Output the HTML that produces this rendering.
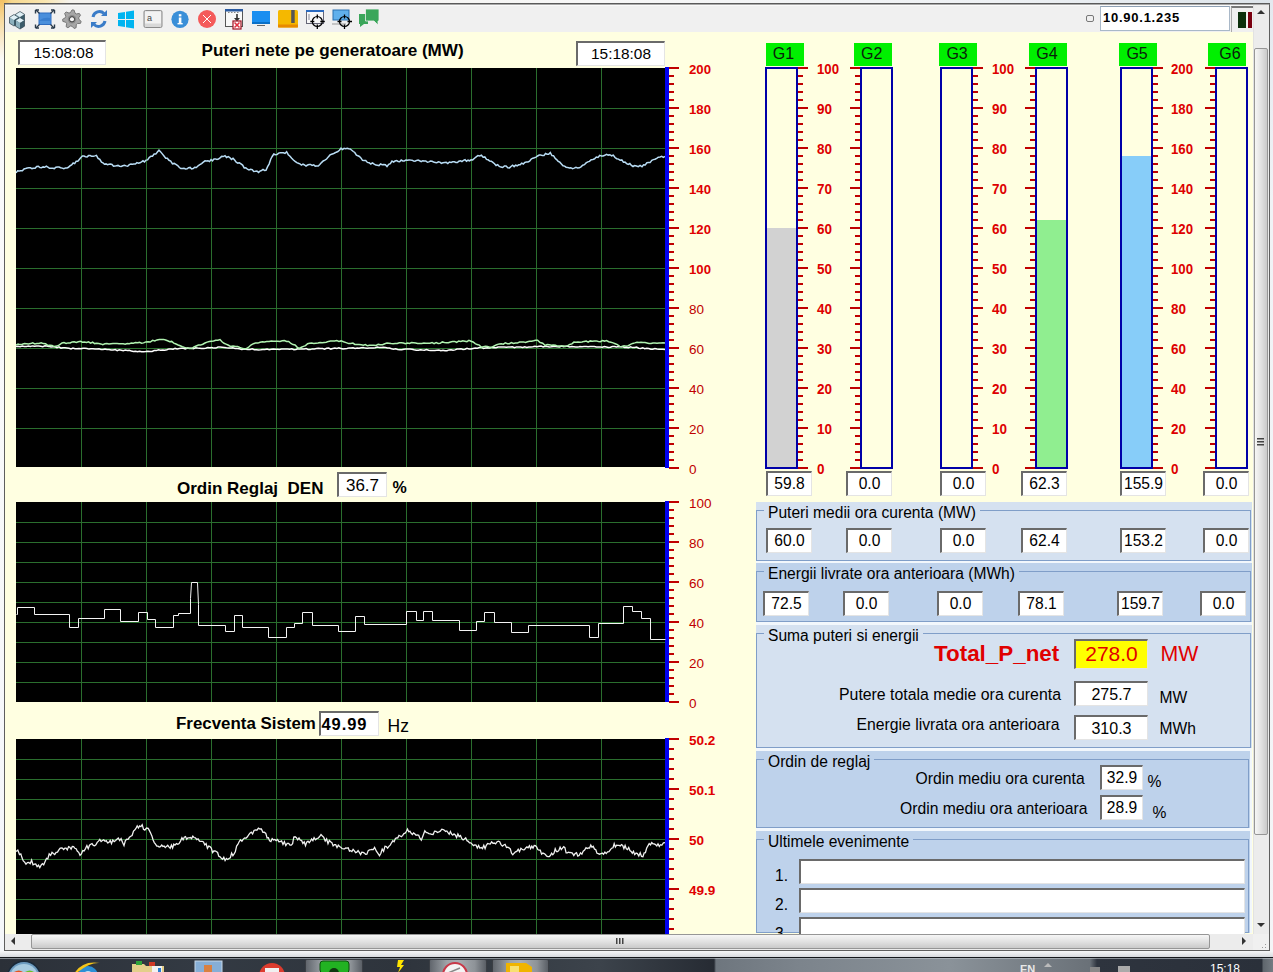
<!DOCTYPE html><html><head><meta charset="utf-8"><style>
*{margin:0;padding:0;box-sizing:border-box}
html,body{width:1273px;height:972px;overflow:hidden;background:#e8ecf0;font-family:"Liberation Sans",sans-serif}
.a{position:absolute}
.t{position:absolute;white-space:nowrap;line-height:1}
.bx{position:absolute;border-top:2px solid #6a6a6a;border-left:2px solid #6a6a6a;border-right:1px solid #e4e4e4;border-bottom:1px solid #e4e4e4;display:flex;align-items:center;justify-content:center;white-space:nowrap;line-height:1}
.gl{position:absolute;top:43px;width:38px;height:23px;background:#00f000}
.frame{position:absolute;border:1px solid #809ec8}
</style></head><body>

<div class="a" style="left:0;top:0;width:1273px;height:4px;background:linear-gradient(90deg,#f0b850 0,#f6d890 12px,#fae6b0 45px,#f5f3ee 70px,#f7f7f7 600px,#eef1f4 1000px,#dde4ea 1273px)"></div>
<div class="a" style="left:0;top:0;width:4px;height:972px;background:linear-gradient(180deg,#f3c163 0,#f8dba0 20px,#fbfbfb 60px,#f5f7fa 900px)"></div>
<div class="a" style="left:1270px;top:0;width:3px;height:972px;background:linear-gradient(180deg,#e4e9ef,#f0f3f6 200px,#f4f5f7)"></div>
<div class="a" style="left:4px;top:3px;width:1266px;height:948px;border:1px solid #5e5e5e;border-top:2px solid #a8a8a8;background:#fff"></div>
<div class="a" style="left:4px;top:3px;width:1266px;height:1px;background:#5a5a5a"></div>
<div class="a" style="left:5px;top:5px;width:1248px;height:27px;background:#f0f0f0;border-top:1px solid #fafafa"></div>
<div class="a" style="left:5px;top:32px;width:1248px;height:902px;background:#ffffe1"></div>
<div class="bx" style="left:18px;top:40px;width:88px;height:25px;background:#fff"><span style="font-size:15.4px;color:#000;font-weight:normal;position:relative;left:1px">15:08:08</span></div>
<div class="bx" style="left:576px;top:41px;width:89px;height:25px;background:#fff"><span style="font-size:15.4px;color:#000;font-weight:normal;">15:18:08</span></div>
<div class="t" style="left:201.5px;top:41.5px;font-size:17.1px;font-weight:bold;color:#000;">Puteri nete pe generatoare (MW)</div>
<div class="t" style="left:177.0px;top:479.6px;font-size:17px;font-weight:bold;color:#000;">Ordin Reglaj&nbsp; DEN</div>
<div class="bx" style="left:337px;top:472px;width:50px;height:25px;background:#fff"><span style="font-size:17px;color:#000;font-weight:normal;position:relative;top:0.5px">36.7</span></div>
<div class="t" style="left:392.5px;top:479.9px;font-size:16px;font-weight:bold;color:#000;">%</div>
<div class="t" style="left:176.0px;top:715.8px;font-size:16.9px;font-weight:bold;color:#000;">Frecventa Sistem</div>
<div class="bx" style="left:319px;top:711px;width:60px;height:25px;background:#fff;justify-content:flex-start"></div>
<div class="t" style="left:321.5px;top:716.2px;font-size:16.5px;font-weight:bold;color:#000;letter-spacing:0.9px">49.99</div>
<div class="t" style="left:387.5px;top:717.9px;font-size:17.5px;font-weight:normal;color:#000;">Hz</div>
<svg class="a" style="left:0;top:0" width="1273" height="972" font-family="Liberation Sans, sans-serif"><defs><clipPath id="c1"><rect x="16" y="68" width="649" height="400"/></clipPath><clipPath id="c3"><rect x="16" y="739" width="649" height="194"/></clipPath></defs><rect x="16" y="68" width="649" height="399" fill="#000"/><path d="M16 108.5H665M16 148.5H665M16 188.5H665M16 228.5H665M16 268.5H665M16 308.5H665M16 348.5H665M16 388.5H665M16 428.5H665M81.5 68V467M146.5 68V467M211.5 68V467M276.5 68V467M341.5 68V467M406.5 68V467M471.5 68V467M536.5 68V467M601.5 68V467" stroke="#2a6e2e" stroke-width="1" fill="none"/><rect x="665" y="67" width="4" height="401" fill="#0000f0"/><path d="M669 68h10M669 76h5M669 84h5M669 92h5M669 100h5M669 108h10M669 116h5M669 124h5M669 132h5M669 140h5M669 148h10M669 156h5M669 164h5M669 172h5M669 180h5M669 188h10M669 196h5M669 204h5M669 212h5M669 220h5M669 228h10M669 236h5M669 244h5M669 252h5M669 260h5M669 268h10M669 276h5M669 284h5M669 292h5M669 300h5M669 308h10M669 316h5M669 324h5M669 332h5M669 340h5M669 348h10M669 356h5M669 364h5M669 372h5M669 380h5M669 388h10M669 396h5M669 404h5M669 412h5M669 420h5M669 428h10M669 436h5M669 444h5M669 452h5M669 460h5M669 468h10" stroke="#c00000" stroke-width="2" fill="none"/><text x="689.0" y="69.0" font-size="13.5" font-weight="bold" fill="#e00000" dominant-baseline="central" textLength="22" lengthAdjust="spacingAndGlyphs">200</text><text x="689.0" y="109.0" font-size="13.5" font-weight="bold" fill="#e00000" dominant-baseline="central" textLength="22" lengthAdjust="spacingAndGlyphs">180</text><text x="689.0" y="149.0" font-size="13.5" font-weight="bold" fill="#e00000" dominant-baseline="central" textLength="22" lengthAdjust="spacingAndGlyphs">160</text><text x="689.0" y="189.0" font-size="13.5" font-weight="bold" fill="#e00000" dominant-baseline="central" textLength="22" lengthAdjust="spacingAndGlyphs">140</text><text x="689.0" y="229.0" font-size="13.5" font-weight="bold" fill="#e00000" dominant-baseline="central" textLength="22" lengthAdjust="spacingAndGlyphs">120</text><text x="689.0" y="269.0" font-size="13.5" font-weight="bold" fill="#e00000" dominant-baseline="central" textLength="22" lengthAdjust="spacingAndGlyphs">100</text><text x="689.0" y="309.0" font-size="13.5" font-weight="normal" fill="#c00000" dominant-baseline="central" >80</text><text x="689.0" y="349.0" font-size="13.5" font-weight="normal" fill="#c00000" dominant-baseline="central" >60</text><text x="689.0" y="389.0" font-size="13.5" font-weight="normal" fill="#c00000" dominant-baseline="central" >40</text><text x="689.0" y="429.0" font-size="13.5" font-weight="normal" fill="#c00000" dominant-baseline="central" >20</text><text x="689.0" y="469.0" font-size="13.5" font-weight="normal" fill="#c00000" dominant-baseline="central" >0</text><g clip-path="url(#c1)"><polyline points="16.0,346.5 18.1,346.2 20.1,346.8 22.2,346.1 24.2,346.6 26.3,346.4 28.4,346.0 30.4,346.5 32.5,345.9 34.6,346.3 36.6,345.9 38.7,345.9 40.8,346.2 42.8,346.7 44.9,345.8 46.9,345.9 49.0,346.4 51.0,347.0 53.0,346.8 55.0,346.8 57.0,347.7 59.0,346.9 61.0,348.1 63.0,347.7 65.0,347.7 67.0,347.9 69.0,348.2 71.0,348.9 73.0,348.1 75.0,348.7 77.0,348.8 79.0,348.5 81.0,348.8 83.0,348.2 85.0,348.3 87.0,348.5 89.0,349.1 91.0,348.8 93.0,348.7 95.0,349.1 97.0,349.0 99.0,348.8 101.0,349.5 103.0,349.4 105.0,348.9 107.0,349.4 109.1,349.5 111.1,350.0 113.1,350.0 115.2,349.6 117.2,350.6 119.2,349.7 121.3,350.2 123.3,350.7 125.3,350.1 127.3,350.6 129.4,350.2 131.4,351.1 133.4,351.4 135.5,351.3 137.5,351.8 139.5,351.2 141.6,351.8 143.6,351.8 145.7,351.6 147.8,351.2 149.9,351.5 152.1,351.4 154.2,350.6 156.3,350.6 158.4,349.7 160.5,350.3 162.7,350.0 164.8,350.2 166.9,349.8 169.0,348.9 171.0,349.0 173.1,349.3 175.1,348.4 177.2,348.9 179.2,348.4 181.2,348.3 183.3,348.2 185.3,348.9 187.4,348.1 189.4,348.2 191.4,348.3 193.5,348.8 195.5,347.8 197.6,348.1 199.6,348.2 201.6,348.5 203.7,348.4 205.7,348.3 207.8,347.6 209.8,347.7 211.8,347.5 213.9,348.1 215.9,348.1 218.0,347.1 220.0,347.0 222.2,347.2 224.3,347.4 226.4,347.8 228.6,348.1 230.8,347.9 232.9,347.7 235.1,348.4 237.2,348.4 239.4,348.8 241.5,349.4 243.7,349.3 245.8,349.2 247.9,349.4 250.1,349.5 252.2,348.8 254.3,349.8 256.4,349.7 258.6,349.9 260.7,349.8 262.8,349.4 264.9,349.5 267.1,349.1 269.2,349.8 271.3,349.2 273.4,349.1 275.4,349.3 277.4,349.2 279.5,349.4 281.6,349.0 283.6,348.9 285.7,349.0 287.7,348.9 289.8,349.2 291.8,348.7 293.9,349.7 295.9,349.4 297.9,348.8 300.0,348.9 302.1,348.9 304.1,348.9 306.1,348.6 308.2,349.4 310.2,349.6 312.3,348.9 314.4,348.9 316.4,348.4 318.4,348.3 320.5,348.6 322.6,348.5 324.6,349.1 326.6,348.3 328.7,348.1 330.8,349.1 332.8,348.6 334.9,348.1 336.9,348.5 338.9,347.9 341.0,348.4 343.0,348.9 345.0,348.7 347.0,348.5 349.1,347.9 351.1,348.0 353.1,347.7 355.1,348.4 357.1,348.0 359.1,348.3 361.2,347.7 363.2,347.5 365.2,348.1 367.2,348.3 369.2,348.1 371.2,348.0 373.3,347.9 375.3,347.8 377.3,347.1 379.3,347.4 381.3,347.4 383.4,347.2 385.4,347.4 387.5,347.9 389.5,348.0 391.5,348.7 393.6,349.2 395.6,348.8 397.7,349.5 399.7,349.8 401.8,349.8 403.8,349.2 405.9,349.1 407.9,349.1 410.0,349.1 412.1,349.2 414.1,349.8 416.2,350.2 418.3,350.2 420.3,349.8 422.4,350.1 424.4,350.3 426.5,349.5 428.6,350.3 430.6,350.6 432.7,350.5 434.8,350.6 436.8,350.3 438.9,350.0 440.9,350.8 443.0,350.3 445.0,350.7 447.0,350.8 449.0,349.9 451.0,349.8 453.0,350.3 455.0,349.9 457.0,349.1 459.0,348.9 461.0,348.7 463.0,349.5 465.0,349.2 467.0,348.3 469.0,348.9 471.0,349.0 473.1,348.5 475.2,348.0 477.3,348.2 479.4,347.6 481.5,347.4 483.5,348.4 485.6,347.9 487.7,347.7 489.8,348.1 491.9,347.4 494.0,347.8 496.0,347.8 498.1,347.0 500.1,347.0 502.2,347.0 504.2,346.9 506.3,347.3 508.3,346.9 510.4,347.0 512.4,346.7 514.5,347.6 516.5,346.9 518.6,347.0 520.6,347.1 522.7,347.4 524.7,346.8 526.8,347.4 528.8,346.9 530.9,346.9 532.9,346.8 535.0,346.2 537.0,346.7 539.1,346.3 541.1,346.1 543.2,347.0 545.2,346.2 547.2,346.6 549.3,346.9 551.3,346.7 553.4,346.4 555.4,346.6 557.5,346.7 559.5,346.9 561.6,346.1 563.6,346.7 565.6,346.3 567.7,346.3 569.7,346.9 571.8,346.6 573.8,346.7 575.9,346.9 577.9,347.1 579.9,346.5 582.0,346.7 584.0,346.6 586.1,346.6 588.1,346.8 590.2,346.5 592.2,346.6 594.3,346.6 596.3,347.1 598.3,346.9 600.3,347.1 602.3,347.3 604.4,346.5 606.4,346.9 608.4,347.4 610.4,347.3 612.4,346.5 614.4,346.5 616.5,347.0 618.5,346.6 620.5,346.8 622.5,346.6 624.5,347.4 626.5,347.6 628.6,347.8 630.6,346.9 632.6,347.6 634.6,347.6 636.6,347.1 638.7,348.2 640.7,348.4 642.7,347.7 644.7,348.7 646.8,348.2 648.8,348.5 650.8,349.2 652.8,349.2 654.9,348.5 656.9,349.0 658.9,349.3 660.9,349.2 663.0,349.2 665.0,349.5" fill="none" stroke="#ffffff" stroke-width="1.5"/><polyline points="16.0,345.2 18.1,344.0 20.2,344.6 22.3,344.2 24.4,343.5 26.5,343.7 28.5,343.9 30.6,343.6 32.7,342.8 34.8,343.9 36.9,343.4 39.0,343.5 41.2,342.8 43.4,343.6 45.6,343.8 47.7,345.4 49.9,345.3 52.1,345.6 54.3,346.6 56.9,346.1 59.4,344.9 62.0,343.0 64.0,342.6 66.1,343.5 68.1,342.9 70.2,342.9 72.2,341.9 74.2,341.7 76.3,342.4 78.3,341.8 80.4,341.2 82.4,342.2 84.4,342.0 86.5,342.5 88.5,341.8 90.6,343.1 92.6,342.2 94.6,343.6 96.7,343.3 98.7,343.4 100.8,343.9 102.8,344.7 104.8,343.8 106.9,343.6 108.9,344.1 111.0,343.7 113.0,343.6 115.0,343.6 117.1,343.5 119.1,343.7 121.2,343.8 123.2,343.8 125.2,344.3 127.3,343.5 129.3,343.7 131.4,343.1 133.4,343.2 135.4,342.6 137.5,342.8 139.5,342.4 141.6,343.3 143.6,342.9 145.8,341.9 148.1,341.8 150.3,342.0 152.6,340.3 154.8,340.9 157.0,339.9 159.3,339.5 161.5,339.5 163.5,339.4 165.6,340.0 167.6,340.8 169.7,341.8 171.7,341.4 173.8,343.1 176.0,344.0 178.1,345.0 180.2,345.7 182.4,346.7 184.5,347.4 187.1,348.1 189.6,348.6 191.8,348.6 194.0,347.0 196.2,346.0 198.4,345.0 200.6,345.1 202.8,344.2 205.0,343.0 207.1,342.1 209.3,341.6 211.4,341.2 213.6,341.0 215.7,340.2 217.9,340.2 220.0,339.5 222.0,341.8 224.0,343.3 226.0,344.1 228.0,345.0 230.5,346.5 233.1,345.9 235.6,346.4 237.6,346.4 239.7,347.5 241.7,348.1 243.8,348.7 245.8,348.8 248.3,347.5 250.9,345.0 253.4,343.7 255.6,343.1 257.9,343.1 260.1,342.2 262.4,341.8 264.6,341.9 266.8,341.4 269.1,341.5 271.3,341.0 273.5,341.3 275.7,341.2 277.9,341.2 280.0,341.4 282.2,340.7 284.4,340.6 286.6,341.5 288.7,341.5 290.9,343.5 293.0,344.6 295.1,345.0 297.3,347.3 299.4,348.5 301.4,347.2 303.5,346.4 305.5,345.6 307.6,343.7 309.6,343.3 311.7,343.1 313.8,343.4 315.9,343.2 318.0,343.1 320.1,342.6 322.2,342.8 324.3,342.4 326.3,342.2 328.4,341.4 330.5,341.0 332.6,341.0 334.7,341.1 336.8,340.6 338.9,341.4 341.0,340.9 343.6,341.8 346.1,342.6 348.7,343.6 350.8,343.5 352.9,343.1 354.9,344.4 357.0,344.6 359.1,344.5 361.2,344.8 363.3,345.2 365.4,344.6 367.4,345.8 369.5,345.3 371.6,345.3 373.8,345.2 376.0,345.5 378.2,344.4 380.4,344.8 382.6,344.7 384.8,343.7 387.0,343.1 389.0,343.3 391.1,343.6 393.1,343.7 395.2,343.5 397.2,343.5 399.3,342.7 401.3,342.8 403.4,343.0 405.4,343.6 407.5,343.0 409.5,343.4 411.6,342.6 413.6,342.7 415.7,343.0 417.7,343.5 419.8,343.6 421.8,343.5 423.9,343.0 425.9,343.3 428.0,343.3 430.0,343.3 432.1,342.6 434.1,343.6 436.1,342.5 438.2,343.5 440.2,343.3 442.3,341.9 444.4,342.4 446.4,342.7 448.4,342.8 450.5,342.0 452.6,341.6 454.6,341.4 456.6,342.3 458.7,341.1 460.8,341.5 462.8,340.8 464.9,341.2 466.9,341.7 468.9,340.4 471.0,341.2 473.1,342.0 475.2,343.7 477.2,344.6 479.3,345.1 481.4,347.3 483.4,346.8 485.5,346.3 487.5,346.4 489.6,347.2 491.6,347.3 494.2,346.0 496.7,344.7 499.3,343.9 501.3,343.7 503.3,344.2 505.3,342.9 507.4,343.8 509.4,343.7 511.4,342.5 513.4,343.5 515.4,343.0 517.4,343.1 519.5,342.1 521.5,342.0 523.5,341.9 525.5,342.5 527.5,341.8 529.5,341.3 531.6,341.2 533.6,340.8 535.6,340.3 537.6,340.2 540.1,342.6 542.7,343.2 545.2,345.5 547.2,344.6 549.3,344.8 551.4,345.2 553.4,344.9 555.5,345.2 557.5,346.1 559.6,346.1 561.6,346.1 563.7,346.0 565.7,346.5 567.8,345.7 569.8,344.4 571.9,343.9 573.9,342.1 576.0,342.3 578.0,341.9 580.1,342.2 582.1,342.0 584.1,341.4 586.2,341.0 588.2,342.1 590.2,340.9 592.3,341.3 594.3,341.1 596.3,340.9 598.4,341.5 600.4,341.7 602.4,340.6 604.5,341.1 606.5,340.5 608.7,341.7 610.9,342.3 613.1,342.9 615.2,343.7 617.4,344.6 619.6,346.4 621.8,346.7 624.0,345.8 626.1,346.2 628.3,345.7 630.5,344.4 632.7,343.4 634.8,342.9 637.0,342.2 639.0,342.6 641.0,342.3 643.0,342.5 645.0,342.6 647.0,343.1 649.0,343.6 651.0,343.4 653.0,343.0 655.0,343.0 657.0,343.2 659.0,343.0 661.0,343.0 663.0,342.7 665.0,343.0" fill="none" stroke="#b0f2b0" stroke-width="1.5"/><polyline points="16.0,172.9 17.6,170.8 19.2,171.0 20.8,170.8 22.4,170.7 24.0,168.9 25.6,168.5 27.2,168.0 28.8,167.8 30.4,167.8 32.0,168.6 33.6,168.3 35.1,168.2 36.7,166.4 38.3,166.2 39.9,167.5 41.5,167.7 43.1,166.9 44.7,167.3 46.3,166.2 47.9,167.1 49.5,168.3 51.1,168.2 52.7,168.3 54.3,168.6 55.9,167.2 57.5,166.9 59.1,167.0 60.6,167.7 62.2,168.1 63.8,168.6 65.4,168.1 67.0,168.0 68.5,167.3 70.1,165.7 71.6,165.0 73.2,163.0 74.7,163.6 76.2,161.2 77.8,161.3 79.3,159.5 80.9,157.6 82.4,156.0 84.0,156.1 85.5,156.8 87.1,156.9 88.6,155.6 90.2,155.5 91.7,156.3 93.3,156.3 94.8,155.9 96.4,155.4 98.1,158.4 99.8,159.4 101.5,162.2 103.0,162.9 104.5,164.2 106.0,163.9 107.5,164.7 109.0,164.3 110.5,164.1 112.0,164.5 113.5,166.3 115.0,166.1 116.5,165.7 118.0,165.4 119.6,166.2 121.2,166.4 122.8,165.7 124.5,165.2 126.1,165.9 127.7,166.2 129.3,164.6 130.9,164.1 132.4,164.2 133.9,163.9 135.4,164.0 136.9,162.6 138.4,163.3 140.0,162.8 141.5,161.9 143.0,160.8 144.5,161.9 146.0,160.1 147.6,159.9 149.2,157.5 150.9,156.3 152.5,156.2 154.1,154.0 155.8,154.1 157.4,152.0 159.0,150.2 160.7,151.9 162.3,153.9 164.0,156.0 165.7,158.2 167.3,158.2 169.0,160.3 170.7,161.1 172.5,163.8 174.2,163.4 175.9,164.4 177.7,165.6 179.4,167.5 180.9,168.5 182.5,168.6 184.0,168.3 185.5,168.9 187.1,168.8 188.6,167.7 190.1,167.4 191.6,169.0 193.2,168.6 194.7,167.3 196.4,167.5 198.1,165.8 199.8,164.7 201.6,163.6 203.3,162.2 205.0,160.8 206.5,161.0 208.0,160.7 209.5,161.6 211.0,159.5 212.5,160.8 214.0,158.9 215.5,158.9 217.0,159.4 218.5,159.0 220.0,157.9 221.7,156.4 223.3,156.6 225.0,155.7 226.6,157.5 228.2,156.7 229.8,157.6 231.4,159.4 233.0,158.3 234.6,160.1 236.2,162.1 237.8,163.1 239.4,162.8 241.0,163.9 242.6,165.1 244.2,167.9 245.8,167.7 247.4,169.2 249.0,169.9 250.6,169.3 252.2,169.6 253.7,171.5 255.3,171.3 256.9,171.0 258.5,172.4 260.0,171.1 261.5,170.5 263.0,169.4 264.5,170.4 266.0,170.2 267.6,166.6 269.1,164.1 270.7,159.2 272.2,156.5 273.8,154.0 275.4,154.7 277.0,154.5 278.6,153.1 280.2,152.7 281.8,152.8 283.4,152.7 285.0,153.4 286.6,151.7 288.3,154.7 290.0,156.3 291.7,158.3 293.4,160.0 295.1,161.4 296.8,162.7 298.3,163.2 299.9,163.8 301.4,165.1 303.0,164.2 304.5,165.0 306.0,166.0 307.6,165.0 309.1,164.5 310.6,164.4 312.1,165.4 313.7,164.9 315.2,166.1 316.7,165.9 318.3,166.0 319.8,164.5 321.5,162.6 323.2,161.0 324.9,160.2 326.6,159.0 328.3,156.9 330.0,154.9 331.6,154.3 333.1,153.8 334.7,153.0 336.3,152.2 337.9,151.5 339.4,150.2 341.0,148.2 342.5,149.5 344.1,148.3 345.6,148.7 347.2,148.2 348.7,148.8 350.2,148.9 351.8,150.2 353.3,151.5 354.8,152.5 356.4,155.2 357.9,155.8 359.4,156.5 360.9,157.9 362.5,160.3 364.0,160.5 365.7,160.6 367.4,162.4 369.1,162.7 370.8,164.0 372.5,162.9 374.2,164.2 375.8,165.1 377.4,165.3 379.0,165.6 380.6,164.0 382.2,164.7 383.8,164.5 385.4,164.8 387.0,166.5 388.7,164.3 390.3,163.6 392.0,161.0 393.5,162.0 395.1,161.0 396.6,160.6 398.2,161.5 399.7,161.8 401.2,160.0 402.8,160.9 404.3,160.9 405.9,160.0 407.4,160.2 408.9,159.9 410.5,160.1 412.0,160.2 413.5,161.0 415.0,161.2 416.6,160.4 418.1,160.1 419.6,160.8 421.2,161.6 422.7,160.7 424.3,161.1 425.8,161.0 427.4,162.3 428.9,161.9 430.5,161.1 432.1,161.3 433.6,162.0 435.2,162.4 436.8,162.8 438.3,161.8 439.9,162.1 441.4,163.3 443.0,162.8 444.6,162.4 446.2,162.3 447.8,163.5 449.4,162.0 451.1,162.4 452.7,161.8 454.3,161.8 455.9,162.5 457.4,162.6 458.9,161.2 460.4,160.7 461.9,161.5 463.4,160.3 465.0,159.7 466.5,161.3 468.0,160.2 469.5,160.8 471.0,159.8 472.7,159.9 474.5,158.2 476.2,156.8 477.9,155.6 479.7,155.9 481.4,155.2 483.1,157.2 484.8,156.9 486.5,159.4 488.1,159.8 489.7,161.0 491.3,161.2 492.9,162.4 494.5,163.7 496.1,165.5 497.7,164.7 499.3,166.4 501.0,167.1 502.7,167.5 504.4,166.0 506.1,166.0 507.8,167.7 509.5,167.9 511.0,166.5 512.6,165.2 514.1,166.6 515.6,165.1 517.1,165.8 518.7,164.8 520.2,164.8 521.7,163.1 523.3,164.0 524.8,162.4 526.4,162.0 528.0,162.0 529.6,161.1 531.2,159.0 532.8,158.2 534.4,157.7 536.0,157.1 537.6,156.0 539.2,155.1 540.8,155.0 542.4,155.6 544.0,155.6 545.5,153.5 547.1,154.2 548.7,154.3 550.3,152.5 551.9,155.6 553.5,155.7 555.1,158.2 556.6,159.6 558.2,161.3 559.8,162.2 561.4,163.9 563.0,165.8 564.6,166.1 566.1,167.2 567.7,167.4 569.2,168.0 570.8,167.7 572.5,168.6 574.2,168.1 575.9,167.3 577.6,168.0 579.3,167.8 581.0,166.8 582.7,165.2 584.4,164.7 586.1,162.9 587.8,161.9 589.5,161.4 591.2,159.7 592.9,159.5 594.6,158.8 596.3,157.0 598.0,157.4 599.7,155.4 601.4,155.9 603.1,155.9 604.8,155.3 606.5,154.3 608.2,155.1 609.9,154.7 611.6,155.8 613.3,155.1 615.0,157.5 616.7,158.7 618.4,159.1 620.1,160.2 621.8,159.9 623.4,162.2 625.0,162.0 626.6,163.6 628.2,164.3 629.8,163.5 631.4,165.5 633.0,166.5 634.6,165.5 636.5,166.0 638.3,166.7 640.1,165.4 642.0,166.8 643.6,164.7 645.2,164.9 646.9,162.7 648.5,162.6 650.1,162.6 651.8,160.3 653.4,159.6 655.0,159.2 656.7,158.3 658.3,157.2 660.0,157.0 661.7,156.4 663.3,157.4 665.0,156.4" fill="none" stroke="#b8dcf4" stroke-width="1.5"/></g><rect x="16" y="502" width="649" height="200" fill="#000"/><path d="M16 522.5H665M16 542.5H665M16 562.5H665M16 582.5H665M16 602.5H665M16 622.5H665M16 642.5H665M16 662.5H665M16 682.5H665M81.5 502V702M146.5 502V702M211.5 502V702M276.5 502V702M341.5 502V702M406.5 502V702M471.5 502V702M536.5 502V702M601.5 502V702" stroke="#2a6e2e" stroke-width="1" fill="none"/><rect x="665" y="501" width="4" height="201" fill="#0000f0"/><path d="M669 502h10M669 510h5M669 518h5M669 526h5M669 534h5M669 542h10M669 550h5M669 558h5M669 566h5M669 574h5M669 582h10M669 590h5M669 598h5M669 606h5M669 614h5M669 622h10M669 630h5M669 638h5M669 646h5M669 654h5M669 662h10M669 670h5M669 678h5M669 686h5M669 694h5M669 702h10" stroke="#c00000" stroke-width="2" fill="none"/><text x="689.0" y="503.0" font-size="13.5" font-weight="normal" fill="#c00000" dominant-baseline="central" >100</text><text x="689.0" y="543.0" font-size="13.5" font-weight="normal" fill="#c00000" dominant-baseline="central" >80</text><text x="689.0" y="583.0" font-size="13.5" font-weight="normal" fill="#c00000" dominant-baseline="central" >60</text><text x="689.0" y="623.0" font-size="13.5" font-weight="normal" fill="#c00000" dominant-baseline="central" >40</text><text x="689.0" y="663.0" font-size="13.5" font-weight="normal" fill="#c00000" dominant-baseline="central" >20</text><text x="689.0" y="703.0" font-size="13.5" font-weight="normal" fill="#c00000" dominant-baseline="central" >0</text><polyline points="16.5,614.5 17.5,614.5 17.5,607.5 34.5,607.5 34.5,614.5 69.5,614.5 69.5,627.5 78.5,627.5 78.5,618.5 104.5,618.5 104.5,609.5 120.5,609.5 120.5,621.5 138.5,621.5 138.5,612.5 147.5,612.5 147.5,619.5 155.5,619.5 155.5,627.5 173.5,627.5 173.5,615.5 178.5,615.5 178.5,613.5 190.5,613.5 190.5,598.5 191.5,582.5 197.5,582.5 198.5,604.5 198.5,625.5 225.5,625.5 225.5,631.5 234.5,631.5 234.5,615.5 242.5,615.5 242.5,627.5 268.5,627.5 268.5,637.5 286.5,637.5 286.5,627.5 294.5,627.5 294.5,623.5 302.5,623.5 302.5,612.5 312.5,612.5 312.5,625.5 338.5,625.5 338.5,631.5 355.5,631.5 355.5,616.5 364.5,616.5 364.5,624.5 406.5,624.5 406.5,611.5 416.5,611.5 416.5,620.5 423.5,620.5 423.5,611.5 432.5,611.5 432.5,620.5 459.5,620.5 459.5,630.5 476.5,630.5 476.5,621.5 484.5,621.5 484.5,612.5 494.5,612.5 494.5,622.5 511.5,622.5 511.5,632.5 528.5,632.5 528.5,625.5 589.5,625.5 589.5,637.5 598.5,637.5 598.5,623.5 623.5,623.5 623.5,606.5 632.5,606.5 632.5,611.5 641.5,611.5 641.5,618.5 650.5,618.5 650.5,639.5 665.5,639.5" fill="none" stroke="#f4f4f4" stroke-width="1" /><rect x="16" y="739" width="649" height="200" fill="#000"/><path d="M16 759.5H665M16 779.5H665M16 799.5H665M16 819.5H665M16 839.5H665M16 859.5H665M16 879.5H665M16 899.5H665M16 919.5H665M81.5 739V939M146.5 739V939M211.5 739V939M276.5 739V939M341.5 739V939M406.5 739V939M471.5 739V939M536.5 739V939M601.5 739V939" stroke="#2a6e2e" stroke-width="1" fill="none"/><rect x="665" y="738" width="4" height="201" fill="#0000f0"/><path d="M669 739h10M669 749h5M669 759h5M669 769h5M669 779h5M669 789h10M669 799h5M669 809h5M669 819h5M669 829h5M669 839h10M669 849h5M669 859h5M669 869h5M669 879h5M669 889h10M669 899h5M669 909h5M669 919h5M669 929h5M669 939h10" stroke="#c00000" stroke-width="2" fill="none"/><text x="689.0" y="740.0" font-size="13.5" font-weight="bold" fill="#e00000" dominant-baseline="central" >50.2</text><text x="689.0" y="790.0" font-size="13.5" font-weight="bold" fill="#e00000" dominant-baseline="central" >50.1</text><text x="689.0" y="840.0" font-size="13.5" font-weight="bold" fill="#e00000" dominant-baseline="central" >50</text><text x="689.0" y="890.0" font-size="13.5" font-weight="bold" fill="#e00000" dominant-baseline="central" >49.9</text><g clip-path="url(#c3)"><polyline points="16.0,851.5 17.8,850.0 19.5,854.5 20.8,853.9 22.1,858.1 23.3,860.9 24.6,862.1 26.0,864.2 27.4,862.6 28.8,862.5 30.2,863.7 31.6,860.1 33.0,864.8 34.4,864.1 35.7,864.0 37.1,866.6 38.5,865.2 39.8,867.7 41.1,865.2 42.4,863.6 43.7,864.8 45.1,861.4 46.5,858.3 47.8,858.9 49.2,853.9 50.6,855.4 52.0,852.4 53.4,853.6 54.7,854.6 56.1,852.4 57.5,852.2 58.7,850.2 60.0,848.3 61.2,847.9 62.4,848.0 63.6,849.5 64.9,848.2 66.1,848.1 67.3,849.9 68.6,846.6 69.8,847.2 71.1,849.2 72.3,846.5 73.6,846.6 74.8,848.3 76.1,848.7 77.4,851.3 78.7,852.3 80.0,855.4 81.4,853.8 82.8,850.6 84.1,850.9 85.5,848.6 86.9,845.6 88.2,848.7 89.5,845.2 90.7,844.3 92.0,843.6 93.3,845.4 94.6,845.7 95.9,844.7 97.2,842.4 98.5,841.1 99.8,839.4 101.1,841.5 102.4,840.5 103.7,839.8 105.0,841.3 106.3,840.6 107.6,843.0 108.9,842.4 110.2,840.4 111.5,843.6 112.8,840.0 114.2,841.6 115.6,840.5 116.9,839.3 118.3,838.0 119.7,840.6 121.1,838.7 122.6,842.5 124.0,845.6 125.4,840.5 126.7,839.2 128.1,839.4 129.4,837.3 130.8,836.3 132.1,835.5 133.5,831.1 134.7,830.1 135.9,828.5 137.2,825.8 138.4,828.0 139.6,825.9 140.9,826.7 142.2,824.7 143.5,829.4 144.8,830.1 146.5,828.0 148.2,828.4 149.4,830.6 150.6,833.0 151.9,835.9 153.1,840.0 154.3,842.6 155.5,844.1 156.8,846.2 158.0,846.2 159.2,847.1 160.4,846.7 161.7,845.0 162.9,846.5 164.1,846.0 165.3,847.6 166.5,846.4 167.7,845.3 168.9,846.9 170.2,848.3 171.4,845.1 172.6,848.0 173.8,844.2 175.0,845.2 176.4,843.6 177.8,844.3 179.1,843.6 180.5,841.1 181.9,837.7 183.1,839.9 184.3,837.2 185.5,836.6 186.7,839.3 187.9,837.8 189.2,837.8 190.4,837.5 191.6,838.6 192.8,836.1 194.0,837.5 195.4,837.9 196.8,839.6 198.1,838.8 199.5,841.1 200.9,841.4 202.2,841.3 203.5,842.0 204.8,844.9 206.1,843.6 207.4,848.3 208.7,846.1 210.0,846.6 211.3,848.1 212.6,852.6 213.8,851.0 215.1,851.0 216.3,851.5 217.6,852.5 218.8,856.3 220.1,856.9 221.3,858.2 222.6,859.3 223.8,857.3 225.1,860.5 226.4,858.5 227.7,859.5 229.0,858.5 230.3,857.8 231.6,853.1 232.9,855.6 234.1,853.8 235.3,851.8 236.6,846.1 237.8,844.5 239.0,842.0 240.4,839.7 241.9,841.2 243.3,839.1 244.6,837.9 245.9,838.3 247.2,837.0 248.5,835.1 249.9,833.2 251.3,832.1 252.6,834.0 254.0,830.5 255.4,829.9 256.9,830.2 258.4,828.2 259.9,829.0 261.4,828.9 262.9,832.3 264.3,832.2 265.8,833.4 267.1,838.0 268.4,837.7 269.6,840.9 270.9,841.6 272.2,838.6 273.5,839.9 274.8,839.5 276.1,840.6 277.5,839.4 278.9,841.7 280.2,841.6 281.6,840.9 283.0,844.4 284.4,841.7 285.8,845.6 287.2,843.4 288.6,843.4 290.0,845.0 291.3,845.1 292.6,843.7 293.8,837.0 295.1,836.8 296.4,837.6 297.7,839.8 299.0,838.0 300.3,840.2 301.6,840.4 302.9,843.4 304.2,841.8 305.5,845.7 306.7,842.1 308.0,841.2 309.2,842.7 310.4,841.2 311.6,838.9 312.9,840.6 314.1,837.6 315.5,839.8 316.9,838.5 318.2,838.1 319.6,836.5 321.0,834.5 322.4,836.0 323.8,837.4 325.2,841.0 326.6,838.8 328.0,843.7 329.3,840.4 330.6,841.8 331.9,842.6 333.1,845.9 334.4,844.7 335.7,844.7 337.0,847.5 338.3,845.1 339.5,846.5 340.8,847.2 342.0,848.5 343.3,848.9 344.5,848.8 345.8,847.9 347.0,848.1 348.2,847.8 349.5,851.2 350.7,850.7 351.9,851.5 353.1,849.3 354.4,850.9 355.6,852.7 356.8,852.2 358.1,850.6 359.3,852.4 360.6,854.6 361.8,852.1 363.1,852.3 364.3,853.1 365.6,854.3 366.9,854.2 368.2,850.6 369.5,849.9 370.7,849.7 372.0,849.4 373.3,849.6 374.6,847.4 376.4,851.2 378.1,853.6 379.5,855.7 380.9,853.2 382.2,849.0 383.6,851.4 385.0,846.2 386.3,846.5 387.6,848.2 388.9,846.4 390.2,845.1 391.5,842.8 392.8,840.8 394.1,841.8 395.4,838.5 396.6,838.0 397.8,837.8 399.0,835.3 400.2,836.0 401.4,836.7 402.7,835.4 403.9,833.6 405.1,833.2 406.3,831.5 407.5,829.1 408.7,831.7 410.0,831.3 411.2,833.3 412.4,834.5 413.6,832.9 414.9,834.0 416.1,835.3 417.4,834.9 418.7,835.2 420.0,838.4 421.3,840.2 423.1,835.4 424.8,830.8 426.2,832.5 427.6,832.8 428.9,833.6 430.3,833.9 431.7,834.3 433.1,834.5 434.6,831.1 436.0,831.3 437.4,832.6 438.9,831.9 440.3,831.2 441.8,829.2 443.2,829.6 444.4,830.2 445.6,831.4 446.8,831.0 448.0,832.7 449.2,834.3 450.4,831.5 451.6,834.1 452.8,835.1 454.0,833.9 455.3,834.9 456.6,837.5 457.9,833.9 459.2,836.6 460.5,835.5 461.8,838.7 463.1,839.9 464.4,838.9 465.7,837.8 467.0,840.7 468.2,841.3 469.5,842.9 470.8,842.8 472.1,844.1 473.4,845.6 474.7,844.9 476.0,845.0 477.3,848.0 478.6,845.4 479.9,848.2 481.2,847.5 482.5,848.6 483.8,845.3 485.1,848.6 486.3,845.3 487.6,843.5 488.9,843.9 490.2,844.0 491.6,841.9 492.9,843.3 494.2,843.0 495.6,843.8 496.9,841.9 498.3,841.2 499.7,841.7 501.0,844.6 502.4,846.1 503.8,845.0 505.1,844.3 506.5,847.5 507.8,847.2 509.0,847.8 510.3,848.9 511.5,853.2 512.8,854.8 514.1,853.2 515.5,851.8 516.8,851.4 518.2,849.2 519.5,851.7 520.9,848.3 522.1,849.3 523.3,849.9 524.5,849.6 525.7,847.9 526.9,846.9 528.1,847.8 529.4,845.7 530.6,848.6 531.8,846.2 533.0,848.2 534.2,845.4 535.4,845.7 536.6,846.9 537.8,849.5 539.0,850.2 540.3,850.2 541.6,854.1 542.9,853.0 544.1,853.6 545.4,854.6 546.7,856.1 548.0,856.7 549.2,856.6 550.4,855.6 551.6,853.2 552.8,854.7 554.0,853.3 555.2,848.8 556.4,851.6 557.6,851.5 558.9,850.4 560.1,847.1 561.3,849.6 562.5,848.2 563.7,846.6 564.9,847.7 566.1,852.9 567.3,852.8 568.5,852.1 569.7,852.5 571.1,852.7 572.4,853.1 573.8,855.5 575.1,853.6 576.5,852.8 577.8,856.1 579.1,855.6 580.5,852.8 581.9,854.2 583.2,851.1 584.6,850.1 586.0,847.7 587.2,848.6 588.4,848.0 589.6,848.1 590.8,845.1 592.0,847.2 593.2,846.3 594.5,849.1 595.7,849.5 597.0,853.3 598.2,853.6 599.5,854.2 600.9,853.7 602.2,853.0 603.5,854.3 604.9,852.1 606.2,853.6 607.6,851.8 609.0,851.6 610.3,849.8 611.6,848.2 613.0,847.8 614.2,843.7 615.4,847.1 616.6,845.2 617.9,845.3 619.1,845.4 620.3,845.9 621.5,844.6 622.7,845.5 623.9,848.7 625.1,845.5 626.3,848.8 627.5,849.5 628.7,847.4 629.9,850.6 631.1,851.5 632.3,853.2 633.5,851.2 634.7,854.6 636.1,853.1 637.4,853.6 638.8,856.0 640.2,852.8 641.5,856.5 642.9,856.7 644.2,852.9 645.4,852.7 646.7,848.0 647.9,845.9 649.2,843.6 650.5,844.9 651.7,842.6 653.0,843.8 654.2,843.9 655.5,844.6 656.8,846.0 658.0,843.8 659.3,846.4 660.5,844.7 661.8,845.3 663.4,842.9 665.0,842.6" fill="none" stroke="#f0f0f0" stroke-width="1.3"/></g><rect x="765" y="67" width="33" height="402" fill="#0000a8"/><rect x="767" y="69" width="29" height="398" fill="#ffffe1"/><rect x="767" y="228" width="29" height="239" fill="#d2d2d2"/><path d="M798 68h10M798 76h5M798 84h5M798 92h5M798 100h5M798 108h10M798 116h5M798 124h5M798 132h5M798 140h5M798 148h10M798 156h5M798 164h5M798 172h5M798 180h5M798 188h10M798 196h5M798 204h5M798 212h5M798 220h5M798 228h10M798 236h5M798 244h5M798 252h5M798 260h5M798 268h10M798 276h5M798 284h5M798 292h5M798 300h5M798 308h10M798 316h5M798 324h5M798 332h5M798 340h5M798 348h10M798 356h5M798 364h5M798 372h5M798 380h5M798 388h10M798 396h5M798 404h5M798 412h5M798 420h5M798 428h10M798 436h5M798 444h5M798 452h5M798 460h5M798 468h10" stroke="#c00000" stroke-width="2" fill="none"/><text x="817" y="69" font-size="14" font-weight="bold" fill="#dd0000" dominant-baseline="central" textLength="22" lengthAdjust="spacingAndGlyphs">100</text><text x="817" y="109" font-size="14" font-weight="bold" fill="#dd0000" dominant-baseline="central" textLength="15" lengthAdjust="spacingAndGlyphs">90</text><text x="817" y="149" font-size="14" font-weight="bold" fill="#dd0000" dominant-baseline="central" textLength="15" lengthAdjust="spacingAndGlyphs">80</text><text x="817" y="189" font-size="14" font-weight="bold" fill="#dd0000" dominant-baseline="central" textLength="15" lengthAdjust="spacingAndGlyphs">70</text><text x="817" y="229" font-size="14" font-weight="bold" fill="#dd0000" dominant-baseline="central" textLength="15" lengthAdjust="spacingAndGlyphs">60</text><text x="817" y="269" font-size="14" font-weight="bold" fill="#dd0000" dominant-baseline="central" textLength="15" lengthAdjust="spacingAndGlyphs">50</text><text x="817" y="309" font-size="14" font-weight="bold" fill="#dd0000" dominant-baseline="central" textLength="15" lengthAdjust="spacingAndGlyphs">40</text><text x="817" y="349" font-size="14" font-weight="bold" fill="#dd0000" dominant-baseline="central" textLength="15" lengthAdjust="spacingAndGlyphs">30</text><text x="817" y="389" font-size="14" font-weight="bold" fill="#dd0000" dominant-baseline="central" textLength="15" lengthAdjust="spacingAndGlyphs">20</text><text x="817" y="429" font-size="14" font-weight="bold" fill="#dd0000" dominant-baseline="central" textLength="15" lengthAdjust="spacingAndGlyphs">10</text><text x="817" y="469" font-size="14" font-weight="bold" fill="#dd0000" dominant-baseline="central" textLength="7.5" lengthAdjust="spacingAndGlyphs">0</text><rect x="860" y="67" width="33" height="402" fill="#0000a8"/><rect x="862" y="69" width="29" height="398" fill="#ffffe1"/><path d="M860 68h-10M860 76h-5M860 84h-5M860 92h-5M860 100h-5M860 108h-10M860 116h-5M860 124h-5M860 132h-5M860 140h-5M860 148h-10M860 156h-5M860 164h-5M860 172h-5M860 180h-5M860 188h-10M860 196h-5M860 204h-5M860 212h-5M860 220h-5M860 228h-10M860 236h-5M860 244h-5M860 252h-5M860 260h-5M860 268h-10M860 276h-5M860 284h-5M860 292h-5M860 300h-5M860 308h-10M860 316h-5M860 324h-5M860 332h-5M860 340h-5M860 348h-10M860 356h-5M860 364h-5M860 372h-5M860 380h-5M860 388h-10M860 396h-5M860 404h-5M860 412h-5M860 420h-5M860 428h-10M860 436h-5M860 444h-5M860 452h-5M860 460h-5M860 468h-10" stroke="#c00000" stroke-width="2" fill="none"/><rect x="940" y="67" width="33" height="402" fill="#0000a8"/><rect x="942" y="69" width="29" height="398" fill="#ffffe1"/><path d="M973 68h10M973 76h5M973 84h5M973 92h5M973 100h5M973 108h10M973 116h5M973 124h5M973 132h5M973 140h5M973 148h10M973 156h5M973 164h5M973 172h5M973 180h5M973 188h10M973 196h5M973 204h5M973 212h5M973 220h5M973 228h10M973 236h5M973 244h5M973 252h5M973 260h5M973 268h10M973 276h5M973 284h5M973 292h5M973 300h5M973 308h10M973 316h5M973 324h5M973 332h5M973 340h5M973 348h10M973 356h5M973 364h5M973 372h5M973 380h5M973 388h10M973 396h5M973 404h5M973 412h5M973 420h5M973 428h10M973 436h5M973 444h5M973 452h5M973 460h5M973 468h10" stroke="#c00000" stroke-width="2" fill="none"/><text x="992" y="69" font-size="14" font-weight="bold" fill="#dd0000" dominant-baseline="central" textLength="22" lengthAdjust="spacingAndGlyphs">100</text><text x="992" y="109" font-size="14" font-weight="bold" fill="#dd0000" dominant-baseline="central" textLength="15" lengthAdjust="spacingAndGlyphs">90</text><text x="992" y="149" font-size="14" font-weight="bold" fill="#dd0000" dominant-baseline="central" textLength="15" lengthAdjust="spacingAndGlyphs">80</text><text x="992" y="189" font-size="14" font-weight="bold" fill="#dd0000" dominant-baseline="central" textLength="15" lengthAdjust="spacingAndGlyphs">70</text><text x="992" y="229" font-size="14" font-weight="bold" fill="#dd0000" dominant-baseline="central" textLength="15" lengthAdjust="spacingAndGlyphs">60</text><text x="992" y="269" font-size="14" font-weight="bold" fill="#dd0000" dominant-baseline="central" textLength="15" lengthAdjust="spacingAndGlyphs">50</text><text x="992" y="309" font-size="14" font-weight="bold" fill="#dd0000" dominant-baseline="central" textLength="15" lengthAdjust="spacingAndGlyphs">40</text><text x="992" y="349" font-size="14" font-weight="bold" fill="#dd0000" dominant-baseline="central" textLength="15" lengthAdjust="spacingAndGlyphs">30</text><text x="992" y="389" font-size="14" font-weight="bold" fill="#dd0000" dominant-baseline="central" textLength="15" lengthAdjust="spacingAndGlyphs">20</text><text x="992" y="429" font-size="14" font-weight="bold" fill="#dd0000" dominant-baseline="central" textLength="15" lengthAdjust="spacingAndGlyphs">10</text><text x="992" y="469" font-size="14" font-weight="bold" fill="#dd0000" dominant-baseline="central" textLength="7.5" lengthAdjust="spacingAndGlyphs">0</text><rect x="1035" y="67" width="33" height="402" fill="#0000a8"/><rect x="1037" y="69" width="29" height="398" fill="#ffffe1"/><rect x="1037" y="220" width="29" height="247" fill="#90ee90"/><path d="M1035 68h-10M1035 76h-5M1035 84h-5M1035 92h-5M1035 100h-5M1035 108h-10M1035 116h-5M1035 124h-5M1035 132h-5M1035 140h-5M1035 148h-10M1035 156h-5M1035 164h-5M1035 172h-5M1035 180h-5M1035 188h-10M1035 196h-5M1035 204h-5M1035 212h-5M1035 220h-5M1035 228h-10M1035 236h-5M1035 244h-5M1035 252h-5M1035 260h-5M1035 268h-10M1035 276h-5M1035 284h-5M1035 292h-5M1035 300h-5M1035 308h-10M1035 316h-5M1035 324h-5M1035 332h-5M1035 340h-5M1035 348h-10M1035 356h-5M1035 364h-5M1035 372h-5M1035 380h-5M1035 388h-10M1035 396h-5M1035 404h-5M1035 412h-5M1035 420h-5M1035 428h-10M1035 436h-5M1035 444h-5M1035 452h-5M1035 460h-5M1035 468h-10" stroke="#c00000" stroke-width="2" fill="none"/><rect x="1120" y="67" width="33" height="402" fill="#0000a8"/><rect x="1122" y="69" width="29" height="398" fill="#ffffe1"/><rect x="1122" y="156" width="29" height="311" fill="#87cdf9"/><path d="M1153 68h10M1153 76h5M1153 84h5M1153 92h5M1153 100h5M1153 108h10M1153 116h5M1153 124h5M1153 132h5M1153 140h5M1153 148h10M1153 156h5M1153 164h5M1153 172h5M1153 180h5M1153 188h10M1153 196h5M1153 204h5M1153 212h5M1153 220h5M1153 228h10M1153 236h5M1153 244h5M1153 252h5M1153 260h5M1153 268h10M1153 276h5M1153 284h5M1153 292h5M1153 300h5M1153 308h10M1153 316h5M1153 324h5M1153 332h5M1153 340h5M1153 348h10M1153 356h5M1153 364h5M1153 372h5M1153 380h5M1153 388h10M1153 396h5M1153 404h5M1153 412h5M1153 420h5M1153 428h10M1153 436h5M1153 444h5M1153 452h5M1153 460h5M1153 468h10" stroke="#c00000" stroke-width="2" fill="none"/><text x="1171" y="69" font-size="14" font-weight="bold" fill="#dd0000" dominant-baseline="central" textLength="22" lengthAdjust="spacingAndGlyphs">200</text><text x="1171" y="109" font-size="14" font-weight="bold" fill="#dd0000" dominant-baseline="central" textLength="22" lengthAdjust="spacingAndGlyphs">180</text><text x="1171" y="149" font-size="14" font-weight="bold" fill="#dd0000" dominant-baseline="central" textLength="22" lengthAdjust="spacingAndGlyphs">160</text><text x="1171" y="189" font-size="14" font-weight="bold" fill="#dd0000" dominant-baseline="central" textLength="22" lengthAdjust="spacingAndGlyphs">140</text><text x="1171" y="229" font-size="14" font-weight="bold" fill="#dd0000" dominant-baseline="central" textLength="22" lengthAdjust="spacingAndGlyphs">120</text><text x="1171" y="269" font-size="14" font-weight="bold" fill="#dd0000" dominant-baseline="central" textLength="22" lengthAdjust="spacingAndGlyphs">100</text><text x="1171" y="309" font-size="14" font-weight="bold" fill="#dd0000" dominant-baseline="central" textLength="15" lengthAdjust="spacingAndGlyphs">80</text><text x="1171" y="349" font-size="14" font-weight="bold" fill="#dd0000" dominant-baseline="central" textLength="15" lengthAdjust="spacingAndGlyphs">60</text><text x="1171" y="389" font-size="14" font-weight="bold" fill="#dd0000" dominant-baseline="central" textLength="15" lengthAdjust="spacingAndGlyphs">40</text><text x="1171" y="429" font-size="14" font-weight="bold" fill="#dd0000" dominant-baseline="central" textLength="15" lengthAdjust="spacingAndGlyphs">20</text><text x="1171" y="469" font-size="14" font-weight="bold" fill="#dd0000" dominant-baseline="central" textLength="7.5" lengthAdjust="spacingAndGlyphs">0</text><rect x="1215" y="67" width="33" height="402" fill="#0000a8"/><rect x="1217" y="69" width="29" height="398" fill="#ffffe1"/><path d="M1215 68h-10M1215 76h-5M1215 84h-5M1215 92h-5M1215 100h-5M1215 108h-10M1215 116h-5M1215 124h-5M1215 132h-5M1215 140h-5M1215 148h-10M1215 156h-5M1215 164h-5M1215 172h-5M1215 180h-5M1215 188h-10M1215 196h-5M1215 204h-5M1215 212h-5M1215 220h-5M1215 228h-10M1215 236h-5M1215 244h-5M1215 252h-5M1215 260h-5M1215 268h-10M1215 276h-5M1215 284h-5M1215 292h-5M1215 300h-5M1215 308h-10M1215 316h-5M1215 324h-5M1215 332h-5M1215 340h-5M1215 348h-10M1215 356h-5M1215 364h-5M1215 372h-5M1215 380h-5M1215 388h-10M1215 396h-5M1215 404h-5M1215 412h-5M1215 420h-5M1215 428h-10M1215 436h-5M1215 444h-5M1215 452h-5M1215 460h-5M1215 468h-10" stroke="#c00000" stroke-width="2" fill="none"/></svg>
<div class="gl" style="left:766px"></div>
<div class="t" style="left:772.7px;top:46.0px;font-size:16px;font-weight:normal;color:#0a200a;">G1</div>
<div class="gl" style="left:854px"></div>
<div class="t" style="left:861.0px;top:46.0px;font-size:16px;font-weight:normal;color:#0a200a;">G2</div>
<div class="gl" style="left:939px"></div>
<div class="t" style="left:946.4px;top:46.0px;font-size:16px;font-weight:normal;color:#0a200a;">G3</div>
<div class="gl" style="left:1029px"></div>
<div class="t" style="left:1036.3px;top:46.0px;font-size:16px;font-weight:normal;color:#0a200a;">G4</div>
<div class="gl" style="left:1119px"></div>
<div class="t" style="left:1126.4px;top:46.0px;font-size:16px;font-weight:normal;color:#0a200a;">G5</div>
<div class="gl" style="left:1208px"></div>
<div class="t" style="left:1219.3px;top:46.0px;font-size:16px;font-weight:normal;color:#0a200a;">G6</div>
<div class="bx" style="left:766px;top:471px;width:46px;height:25px;background:#fff"><span style="font-size:15.6px;color:#000;font-weight:normal;">59.8</span></div>
<div class="bx" style="left:846px;top:471px;width:46px;height:25px;background:#fff"><span style="font-size:15.6px;color:#000;font-weight:normal;">0.0</span></div>
<div class="bx" style="left:940px;top:471px;width:46px;height:25px;background:#fff"><span style="font-size:15.6px;color:#000;font-weight:normal;">0.0</span></div>
<div class="bx" style="left:1021px;top:471px;width:46px;height:25px;background:#fff"><span style="font-size:15.6px;color:#000;font-weight:normal;">62.3</span></div>
<div class="bx" style="left:1120px;top:471px;width:46px;height:25px;background:#fff"><span style="font-size:15.6px;color:#000;font-weight:normal;">155.9</span></div>
<div class="bx" style="left:1203px;top:471px;width:46px;height:25px;background:#fff"><span style="font-size:15.6px;color:#000;font-weight:normal;">0.0</span></div>
<div class="a" style="left:756px;top:502px;width:496px;height:431px;background:#f2f7fc"></div>
<div class="a" style="left:756px;top:502px;width:496px;height:59px;background:#d5e1f0"></div>
<div class="frame" style="left:756px;top:510px;width:495px;height:51px"></div>
<div class="t" style="left:764.0px;top:505.1px;font-size:15.6px;font-weight:normal;color:#000;"><span style="background:#d5e1f0;padding:0 4px">Puteri medii ora curenta (MW)</span></div>
<div class="a" style="left:756px;top:563px;width:496px;height:59px;background:#bed2eb"></div>
<div class="frame" style="left:756px;top:571px;width:495px;height:51px"></div>
<div class="t" style="left:764.0px;top:566.4px;font-size:15.6px;font-weight:normal;color:#000;"><span style="background:#bed2eb;padding:0 4px">Energii livrate ora anterioara (MWh)</span></div>
<div class="a" style="left:756px;top:625px;width:496px;height:123px;background:#d5e1f0"></div>
<div class="frame" style="left:756px;top:633px;width:495px;height:115px"></div>
<div class="t" style="left:764.0px;top:628.0px;font-size:15.6px;font-weight:normal;color:#000;"><span style="background:#d5e1f0;padding:0 4px">Suma puteri si energii</span></div>
<div class="a" style="left:756px;top:751px;width:494px;height:77px;background:#bed2eb"></div>
<div class="frame" style="left:756px;top:759px;width:493px;height:69px"></div>
<div class="t" style="left:764.0px;top:754.2px;font-size:15.6px;font-weight:normal;color:#000;"><span style="background:#bed2eb;padding:0 4px">Ordin de reglaj</span></div>
<div class="a" style="left:756px;top:831px;width:494px;height:102px;background:#bed2eb"></div>
<div class="frame" style="left:756px;top:839px;width:493px;height:94px"></div>
<div class="t" style="left:764.0px;top:834.4px;font-size:15.6px;font-weight:normal;color:#000;"><span style="background:#bed2eb;padding:0 4px">Ultimele evenimente</span></div>
<div class="bx" style="left:766px;top:528px;width:46px;height:25px;background:#fff"><span style="font-size:15.6px;color:#000;font-weight:normal;">60.0</span></div>
<div class="bx" style="left:846px;top:528px;width:46px;height:25px;background:#fff"><span style="font-size:15.6px;color:#000;font-weight:normal;">0.0</span></div>
<div class="bx" style="left:940px;top:528px;width:46px;height:25px;background:#fff"><span style="font-size:15.6px;color:#000;font-weight:normal;">0.0</span></div>
<div class="bx" style="left:1021px;top:528px;width:46px;height:25px;background:#fff"><span style="font-size:15.6px;color:#000;font-weight:normal;">62.4</span></div>
<div class="bx" style="left:1120px;top:528px;width:46px;height:25px;background:#fff"><span style="font-size:15.6px;color:#000;font-weight:normal;">153.2</span></div>
<div class="bx" style="left:1203px;top:528px;width:46px;height:25px;background:#fff"><span style="font-size:15.6px;color:#000;font-weight:normal;">0.0</span></div>
<div class="bx" style="left:763px;top:591px;width:46px;height:25px;background:#fff"><span style="font-size:15.6px;color:#000;font-weight:normal;">72.5</span></div>
<div class="bx" style="left:843px;top:591px;width:46px;height:25px;background:#fff"><span style="font-size:15.6px;color:#000;font-weight:normal;">0.0</span></div>
<div class="bx" style="left:937px;top:591px;width:46px;height:25px;background:#fff"><span style="font-size:15.6px;color:#000;font-weight:normal;">0.0</span></div>
<div class="bx" style="left:1018px;top:591px;width:46px;height:25px;background:#fff"><span style="font-size:15.6px;color:#000;font-weight:normal;">78.1</span></div>
<div class="bx" style="left:1117px;top:591px;width:46px;height:25px;background:#fff"><span style="font-size:15.6px;color:#000;font-weight:normal;">159.7</span></div>
<div class="bx" style="left:1200px;top:591px;width:46px;height:25px;background:#fff"><span style="font-size:15.6px;color:#000;font-weight:normal;">0.0</span></div>
<div class="t" style="left:934.0px;top:643.0px;font-size:22.4px;font-weight:bold;color:#e00000;">Total_P_net</div>
<div class="bx" style="left:1074px;top:639px;width:74px;height:30px;background:#ffff00"><span style="font-size:21px;color:#e00000;font-weight:normal;position:relative;top:-1px">278.0</span></div>
<div class="t" style="left:1160.5px;top:644.4px;font-size:21.3px;font-weight:normal;color:#e00000;">MW</div>
<div class="t" style="left:839.0px;top:686.5px;font-size:15.85px;font-weight:normal;color:#000;">Putere totala medie ora curenta</div>
<div class="bx" style="left:1074px;top:681px;width:74px;height:25px;background:#fff"><span style="font-size:16px;color:#000;font-weight:normal;position:relative;top:0.5px">275.7</span></div>
<div class="t" style="left:1159.5px;top:689.5px;font-size:15.6px;font-weight:normal;color:#000;">MW</div>
<div class="t" style="left:856.5px;top:716.8px;font-size:15.75px;font-weight:normal;color:#000;">Energie livrata ora anterioara</div>
<div class="bx" style="left:1074px;top:715px;width:74px;height:25px;background:#fff"><span style="font-size:16px;color:#000;font-weight:normal;position:relative;top:0.5px">310.3</span></div>
<div class="t" style="left:1159.5px;top:720.6px;font-size:15.6px;font-weight:normal;color:#000;">MWh</div>
<div class="t" style="left:915.5px;top:770.7px;font-size:15.7px;font-weight:normal;color:#000;">Ordin mediu ora curenta</div>
<div class="bx" style="left:1100px;top:765px;width:43px;height:25px;background:#fff"><span style="font-size:15.6px;color:#000;font-weight:normal;">32.9</span></div>
<div class="t" style="left:1147.5px;top:773.5px;font-size:15.6px;font-weight:normal;color:#000;">%</div>
<div class="t" style="left:900.0px;top:800.7px;font-size:15.7px;font-weight:normal;color:#000;">Ordin mediu ora anterioara</div>
<div class="bx" style="left:1100px;top:795px;width:43px;height:25px;background:#fff"><span style="font-size:15.6px;color:#000;font-weight:normal;">28.9</span></div>
<div class="t" style="left:1152.5px;top:804.5px;font-size:15.6px;font-weight:normal;color:#000;">%</div>
<div class="t" style="left:775.0px;top:867.7px;font-size:15.6px;font-weight:normal;color:#000;">1.</div>
<div class="bx" style="left:799px;top:859px;width:446px;height:25px;background:#fff"><span style="font-size:15.6px;color:#000;font-weight:normal;"></span></div>
<div class="t" style="left:775.0px;top:897.0px;font-size:15.6px;font-weight:normal;color:#000;">2.</div>
<div class="bx" style="left:799px;top:888px;width:446px;height:25px;background:#fff"><span style="font-size:15.6px;color:#000;font-weight:normal;"></span></div>
<div class="t" style="left:775.0px;top:926.3px;font-size:15.6px;font-weight:normal;color:#000;">3.</div>
<div class="bx" style="left:799px;top:917px;width:446px;height:25px;background:#fff"><span style="font-size:15.6px;color:#000;font-weight:normal;"></span></div>
<div class="a" style="left:1100px;top:6px;width:130px;height:25px;background:#fff;border:1px solid #a9b8c8;border-top-color:#8ea0b4"></div>
<div class="t" style="left:1103.0px;top:10.5px;font-size:13px;font-weight:bold;color:#000;letter-spacing:0.75px">10.90.1.235</div>
<div class="a" style="left:1086px;top:15px;width:8px;height:7px;border:1px solid #777;border-radius:2px"></div>
<div class="a" style="left:1231px;top:6px;width:22px;height:26px;border-top:2px solid #777;border-left:1px solid #aaa;background:#f0f0f0"></div>
<div class="a" style="left:1238px;top:12px;width:8px;height:16px;background:#0c300c"></div>
<div class="a" style="left:1248px;top:12px;width:4px;height:16px;background:#7a0010"></div>
<svg class="a" style="left:0;top:0" width="400" height="34"><path d="M15.5 14.3L20 11.5L24.5 14.3L20 17.1Z" fill="#dff0f6"/><path d="M15.5 14.3L20 17.1V23.0L15.5 20.2Z" fill="#8db0bd"/><path d="M20 17.1L24.5 14.3V20.2L20 23.0Z" fill="#3b5c6a"/><path d="M15.5 14.3L20 11.5L24.5 14.3V20.2L20 23.0L15.5 20.2Z" fill="none" stroke="#2c414c" stroke-width="0.7"/><path d="M9.5 17.3L14 14.5L18.5 17.3L14 20.1Z" fill="#dff0f6"/><path d="M9.5 17.3L14 20.1V26.0L9.5 23.2Z" fill="#8db0bd"/><path d="M14 20.1L18.5 17.3V23.2L14 26.0Z" fill="#3b5c6a"/><path d="M9.5 17.3L14 14.5L18.5 17.3V23.2L14 26.0L9.5 23.2Z" fill="none" stroke="#2c414c" stroke-width="0.7"/><path d="M15.5 20.3L20 17.5L24.5 20.3L20 23.1Z" fill="#dff0f6"/><path d="M15.5 20.3L20 23.1V29.0L15.5 26.2Z" fill="#8db0bd"/><path d="M20 23.1L24.5 20.3V26.2L20 29.0Z" fill="#3b5c6a"/><path d="M15.5 20.3L20 17.5L24.5 20.3V26.2L20 29.0L15.5 26.2Z" fill="none" stroke="#2c414c" stroke-width="0.7"/><rect x="38.5" y="12.5" width="13" height="12.5" fill="#2f6cc0"/><rect x="39.5" y="13.5" width="11" height="10.5" fill="#4a8fdc"/><path d="M40 20q4-3 10-2v3h-10z" fill="#3a7fd0"/><path d="M36 10l3.5 3.5M54 10l-3.5 3.5M36 28l3.5-3.5M54 28l-3.5-3.5" stroke="#2a3a4a" stroke-width="1.3"/><path d="M35.5 10v3.5M35.5 10h3.5M54.5 10v3.5M54.5 10h-3.5M35.5 28v-3.5M35.5 28h3.5M54.5 28v-3.5M54.5 28h-3.5" stroke="#2a3a4a" stroke-width="1.4"/><polygon points="72.00,9.90 74.09,10.14 74.99,13.08 76.30,13.91 79.35,13.44 80.47,15.22 78.73,17.76 78.90,19.30 81.16,21.39 80.47,23.38 77.39,23.60 76.30,24.69 76.08,27.77 74.09,28.46 72.00,26.20 70.46,26.03 67.92,27.77 66.14,26.65 66.61,23.60 65.78,22.29 62.84,21.39 62.60,19.30 65.27,17.76 65.78,16.31 64.65,13.44 66.14,11.95 69.01,13.08 70.46,12.57" fill="#a6a6a6" stroke="#6e6e6e" stroke-width="0.9" stroke-linejoin="round"/><circle cx="72" cy="19.3" r="4.2" fill="#8a8a8a"/><circle cx="72" cy="19.3" r="2.6" fill="#f6f6f6" stroke="#3a3a3a" stroke-width="1"/><path d="M93 17a6.5 6.5 0 0 1 11-3.5" stroke="#3a7cc8" stroke-width="3" fill="none"/><path d="M107 10v6h-6z" fill="#3a7cc8"/><path d="M105 21a6.5 6.5 0 0 1-11 3.5" stroke="#3a7cc8" stroke-width="3" fill="none"/><path d="M91 28v-6h6z" fill="#3a7cc8"/><path d="M118 13l7-1v7h-7zM126 11.8l8-1.2v8.4h-8zM118 20h7v7l-7-1zM126 20h8v8.4l-8-1.2z" fill="#00b4f0"/><rect x="144" y="10.5" width="18" height="17" rx="1.5" fill="#d8d8d8" stroke="#8a8a8a" stroke-width="1"/><rect x="145" y="11.5" width="16" height="12" fill="#f2f2f2"/><text x="147" y="21" font-size="9" fill="#444">a</text><circle cx="180" cy="19.3" r="8.6" fill="#3a8fd8"/><rect x="178.8" y="17.5" width="2.6" height="6" fill="#fff"/><rect x="177.5" y="23" width="5.2" height="1.4" fill="#fff"/><rect x="178.8" y="14.2" width="2.6" height="2.2" fill="#fff"/><circle cx="207" cy="19" r="9" fill="#f45a5a"/><path d="M203 15l8 8M211 15l-8 8" stroke="#fff" stroke-width="1" /><rect x="225.5" y="9.5" width="17" height="17" fill="#f8f8f8" stroke="#555" stroke-width="1"/><rect x="225" y="9" width="18" height="2.5" fill="#2a5aa0"/><path d="M228 12.5h12" stroke="#888" stroke-dasharray="1.5 1.5"/><path d="M237 14v5" stroke="#333" stroke-width="1.6"/><path d="M234 18l3 3.5 3-3.5z" fill="#333"/><rect x="233" y="21" width="8" height="8" fill="#fff" stroke="#a01020" stroke-width="1.2"/><path d="M234.5 22.5l5 5M239.5 22.5l-5 5" stroke="#e03040" stroke-width="1.6"/><rect x="252" y="11" width="18" height="13" fill="#1a8ef0"/><rect x="252" y="22" width="18" height="2" fill="#0a70c8"/><path d="M257 25.5h8" stroke="#666" stroke-width="1"/><rect x="278" y="10" width="20" height="17.6" rx="1.5" fill="#f5b800"/><rect x="278" y="24.5" width="20" height="3" fill="#e88a00"/><rect x="291.2" y="10" width="3.5" height="13" fill="#555"/><rect x="306.5" y="10.5" width="17" height="13" fill="#f8f8f8" stroke="#667" stroke-width="1"/><rect x="306" y="10" width="18" height="2" fill="#2a6ac0"/><path d="M308 15h2M308 17h2M308 19h2" stroke="#889" /><circle cx="317.3" cy="21.5" r="5" fill="none" stroke="#000" stroke-width="1.2"/><path d="M317.3 14.5v4M317.3 24.5v4.5M310.3 21.5h4M320.3 21.5h4.5" stroke="#000" stroke-width="1.3"/><rect x="333" y="10" width="16" height="10" fill="#60b0ec" stroke="#2a70b0" stroke-width="1"/><path d="M332 24h14" stroke="#999" stroke-width="1"/><circle cx="344.5" cy="21.5" r="5" fill="none" stroke="#000" stroke-width="1.2"/><path d="M344.5 14.5v4M344.5 24.5v4.5M337.5 21.5h4M347.5 21.5h4.5" stroke="#000" stroke-width="1.3"/><path d="M359 14h9v10h-4l-4 3v-3h-1z" fill="#3aa65a"/><path d="M365.5 9h13.5v12h-1v4l-4-4h-8.5z" fill="#3aa65a" stroke="#f0f0f0" stroke-width="0.8"/></svg>
<div class="a" style="left:1253px;top:5px;width:16px;height:929px;background:#ececec;border-left:1px solid #e2e2e2"></div>
<div class="a" style="left:1254px;top:48px;width:14px;height:787px;background:linear-gradient(90deg,#f6f6f6,#e2e2e2 50%,#cacaca);border:1px solid #969696;border-radius:2px"></div>
<div class="a" style="left:5px;top:934px;width:1248px;height:16px;background:#ececec"></div>
<div class="a" style="left:31px;top:934px;width:1179px;height:15px;background:linear-gradient(180deg,#f6f6f6,#e2e2e2 50%,#cacaca);border:1px solid #969696;border-radius:2px"></div>
<div class="a" style="left:1253px;top:934px;width:16px;height:16px;background:#f0f0f0"></div>
<svg class="a" style="left:0;top:0" width="1273" height="972"><path d="M11 941l4-4v8z" fill="#333"/><path d="M1246 941l-4-4v8z" fill="#333"/><path d="M1261 10l-4 4h8z" fill="#333"/><path d="M1261 927l-4-4h8z" fill="#333"/><path d="M616 938h1.5v6h-1.5zM619 938h1.5v6h-1.5zM622 938h1.5v6h-1.5z" fill="#444"/><path d="M1257 438h7v1.5h-7zM1257 441h7v1.5h-7zM1257 444h7v1.5h-7z" fill="#444"/><path d="M1265 947h1v1h-1zM1262 947h1v1h-1zM1265 944h1v1h-1z" fill="#999"/></svg>
<div class="a" style="left:0;top:951px;width:1273px;height:6px;background:linear-gradient(180deg,#f6f7f8,#e4e6e9 60%,#d6d9dd)"></div>
<div class="a" style="left:0;top:957px;width:1273px;height:15px;background:linear-gradient(90deg,#2b3038 0,#333a43 200px,#2e343c 400px,#3c434b 600px,#262b33 714px,#6e767e 716px,#7c848c 800px,#8a9299 950px,#6a7178 1090px,#2e343e 1097px,#2a303a 1262px,#5e656c 1263px,#757c83 1273px);border-top:1px solid #14171b"></div>
<div class="a" style="left:0;top:958px;width:1273px;height:1px;background:rgba(190,196,204,0.6)"></div>
<div class="a" style="left:305px;top:959px;width:58px;height:13px;background:linear-gradient(90deg,#61666d,#9ea3a8 30%,#a9aeb3 50%,#8e9398 80%,#5a5f66);border:1px solid #3a3e44;border-bottom:none;border-radius:2px 2px 0 0"></div>
<div class="a" style="left:429px;top:959px;width:58px;height:13px;background:linear-gradient(90deg,#61666d,#9ea3a8 30%,#a9aeb3 50%,#8e9398 80%,#5a5f66);border:1px solid #3a3e44;border-bottom:none;border-radius:2px 2px 0 0"></div>
<div class="a" style="left:492px;top:959px;width:57px;height:13px;background:linear-gradient(90deg,#61666d,#9ea3a8 30%,#a9aeb3 50%,#8e9398 80%,#5a5f66);border:1px solid #3a3e44;border-bottom:none;border-radius:2px 2px 0 0"></div>
<svg class="a" style="left:0;top:957px" width="1273" height="15" font-family="Liberation Sans, sans-serif"><circle cx="24" cy="21" r="17.5" fill="#1a2a3a"/><circle cx="24" cy="21" r="16" fill="#6d9cc0"/><circle cx="24" cy="21" r="14" fill="#a8cbe0"/><path d="M14 15q5-3 9 0v6q-5-3-9 0z" fill="#e5521d"/><path d="M25 15q5-3 9 0v6q-5-3-9 0z" fill="#6bbd2a"/><circle cx="88" cy="19" r="10" fill="#2d8fd5"/><circle cx="88" cy="19" r="5" fill="#bfe3f8"/><path d="M74 17q8-14 26-11q-10-1-22 9z" fill="#f5c518"/><path d="M132 7h12l2 2h18v9h-32z" fill="#e3cf8a"/><rect x="136" y="4" width="6" height="4" fill="#2fa33a"/><rect x="149" y="5" width="6" height="4" fill="#cf3a27"/><rect x="152" y="9" width="10" height="8" fill="#f2f2f2"/><rect x="158" y="11" width="3" height="5" fill="#2a7fd0"/><rect x="195" y="4" width="27" height="12" fill="#86aed6" stroke="#c8d8e8" stroke-width="1"/><rect x="204" y="8" width="8" height="7" fill="#d98040"/><circle cx="272" cy="19" r="13" fill="#dc3b2e"/><rect x="265" y="11" width="14" height="6" fill="#f0f0f0"/><rect x="320" y="4" width="29" height="12" rx="3" fill="#22b222" stroke="#0a500a" stroke-width="1"/><circle cx="334" cy="16" r="5" fill="#103810"/><path d="M398 3h6l-3 5h3l-6 8 2-6h-3z" fill="#ffe400"/><circle cx="455" cy="18" r="12" fill="#f4f4f4" stroke="#c83848" stroke-width="2"/><path d="M448 16l12-5" stroke="#888" stroke-width="1.5"/><path d="M506 6h20l6 4v6h-26z" fill="#f0b400"/><rect x="510" y="9" width="9" height="7" fill="#f8e070"/><text x="1020" y="16" font-size="11" font-weight="bold" fill="#e8e8e8">EN</text><path d="M1044 10l4-4 4 4z" fill="#bbb"/><rect x="1090" y="10" width="10" height="5" fill="#888"/><rect x="1118" y="9" width="12" height="6" fill="#aaa"/><text x="1210" y="16" font-size="12" fill="#fff">15:18</text></svg>
</body></html>
